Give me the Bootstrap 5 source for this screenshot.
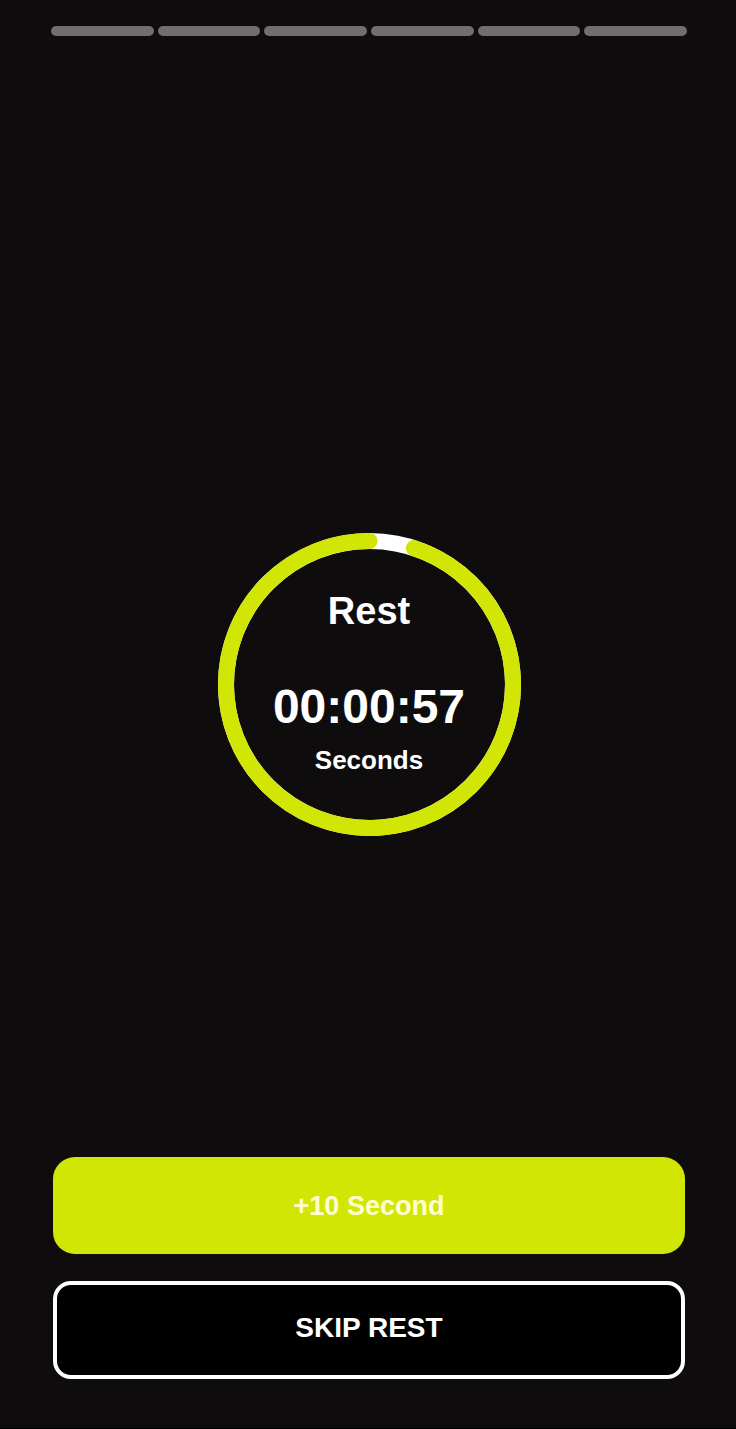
<!DOCTYPE html>
<html lang="en">
<head>
<meta charset="utf-8">
<meta name="viewport" content="width=device-width, initial-scale=1">
<title>Rest timer</title>
<link href="https://cdn.jsdelivr.net/npm/bootstrap@5.3.0/dist/css/bootstrap.min.css" rel="stylesheet">
<style>
  :root { --lime: #d2e606; --ink: #0e0c0d; }
  body { background: var(--ink); color: #fff; font-family: "Liberation Sans", Arial, sans-serif; font-weight: 700; }
  .screen { padding: 26px 49px 49px 51px; border-bottom: 1px solid #000; }
  .steps { gap: 4px; }
  .step { height: 10px; background: #706e6f; }
  .timer-area { padding-top: 176px; }
  .dial { display: grid; width: 303px; height: 303px; }
  .dial > * { grid-area: 1 / 1; }
  .readout { padding-top: 56px; }
  .title { font-size: 38px; line-height: 44px; margin-bottom: 46px; font-weight: 700; }
  .clock { font-size: 48px; line-height: 56px; margin-bottom: 9px; }
  .unit { font-size: 26px; line-height: 32px; }
  .actions { gap: 27px; margin: 0 2px; }
  .actions .btn { font-weight: 700; line-height: 32px; }
  .btn-add { --bs-btn-bg: var(--lime); --bs-btn-color: #fffed0; --bs-btn-hover-bg: #c3d600; --bs-btn-hover-color: #fff; height: 97px; border: 0; border-radius: 22px; font-size: 27px; }
  .btn-skip { --bs-btn-bg: #000; --bs-btn-color: #fff; --bs-btn-hover-bg: #222; --bs-btn-hover-color: #fff; height: 98px; border: 4px solid #fff; border-radius: 18px; font-size: 28px; padding: 0 12px 5px; }
</style>
</head>
<body>
<div class="screen d-flex flex-column min-vh-100">
  <div class="steps d-flex" role="group" aria-label="Workout steps">
    <div class="step flex-fill rounded-pill"></div>
    <div class="step flex-fill rounded-pill"></div>
    <div class="step flex-fill rounded-pill"></div>
    <div class="step flex-fill rounded-pill"></div>
    <div class="step flex-fill rounded-pill"></div>
    <div class="step flex-fill rounded-pill"></div>
  </div>
  <main class="timer-area flex-grow-1 d-flex align-items-center justify-content-center">
    <div class="dial">
      <!-- 57 of 60 seconds remain: 95% of the ring, ending at the top -->
      <svg viewBox="0 0 303 303" width="303" height="303" fill="none" stroke-width="16" aria-hidden="true">
        <circle cx="151.5" cy="151.5" r="143.5" stroke="#fff"/>
        <circle cx="151.5" cy="151.5" r="143.5" stroke="#d2e606" stroke-linecap="round" pathLength="100" stroke-dasharray="95 5" transform="rotate(-72 151.5 151.5)"/>
      </svg>
      <div class="readout text-center">
        <h1 class="title">Rest</h1>
        <div class="clock" role="timer">00:00:57</div>
        <div class="unit">Seconds</div>
      </div>
    </div>
  </main>
  <div class="actions d-flex flex-column">
    <button type="button" class="btn btn-add">+10 Second</button>
    <button type="button" class="btn btn-skip">SKIP REST</button>
  </div>
</div>
<script src="https://cdn.jsdelivr.net/npm/bootstrap@5.3.0/dist/js/bootstrap.bundle.min.js"></script>
</body>
</html>
